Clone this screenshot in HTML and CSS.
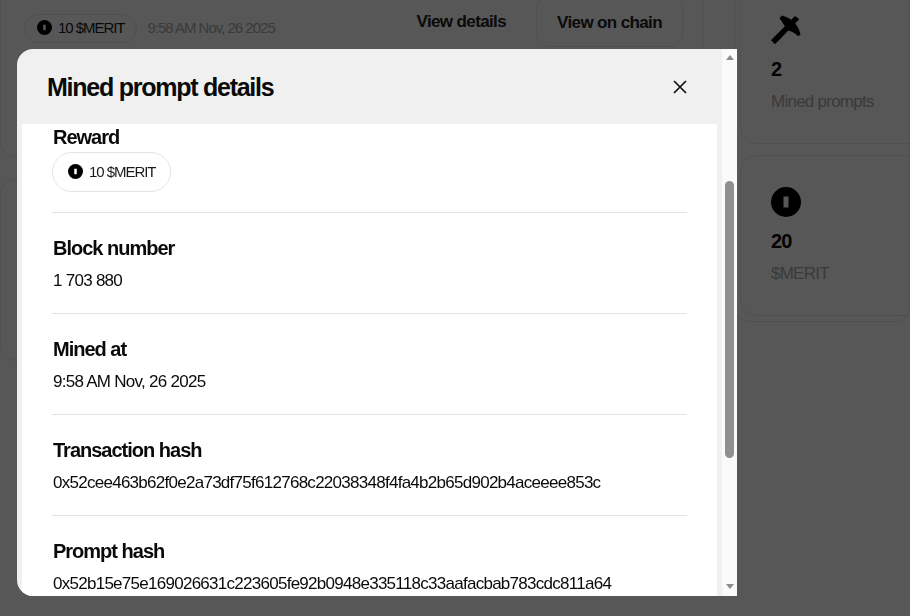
FILE: index.html

```html
<!DOCTYPE html>
<html lang="en">
<head>
  <meta charset="UTF-8" />
  <meta name="viewport" content="width=device-width, initial-scale=1.0"/>
  <title>Mined prompt details</title>
  <link rel="stylesheet" href="styles.css">
</head>
<body>
  <div class="page">
    <div class="prompts">
      <div class="prompt-card">
        <div class="prompt-meta">
          <span class="chip chip-small">
            <svg class="coin" viewBox="0 0 30 30"><circle cx="15" cy="15" r="15"/><rect x="12.500" y="9.500" width="5" height="11" fill="#fff"/></svg>
            10 $MERIT
          </span>
          <span class="prompt-time">9:58 AM Nov, 26 2025</span>
        </div>
        <div class="prompt-actions">
          <a class="action">View details</a>
          <a class="action action-outline">View on chain</a>
        </div>
      </div>
      <div class="prompt-card prompt-card-second"></div>
    </div>
    <div class="stats">
      <div class="stat-card stat-first">
        <svg class="stat-icon" viewBox="0 0 30 30"><path d="M0 25.300 L24 1 L28.300 4.300 L4 29.300 Z"/><path d="M8.500 3 L11 0.500 C16 2 20 4 24 8 C27 12 29 16 29.500 20 L27 21 C24 18 20 16 16 15 C14 11 11 7 8.500 3 Z"/></svg>
        <div class="stat-value">2</div>
        <div class="stat-label">Mined prompts</div>
      </div>
      <div class="stat-card">
        <svg class="stat-icon" viewBox="0 0 30 30"><circle cx="15" cy="15" r="15"/><rect x="12.500" y="9.500" width="5" height="11" fill="#fff"/></svg>
        <div class="stat-value">20</div>
        <div class="stat-label">$MERIT</div>
      </div>
    </div>
  </div>

  <div class="overlay">
    <div class="modal">
      <div class="modal-main">
        <div class="modal-header">
          <h2>Mined prompt details</h2>
          <svg class="close" viewBox="0 0 16 16"><path d="M2 2 L14 14 M14 2 L2 14"/></svg>
        </div>
        <div class="modal-body">
          <div class="row row-first">
            <div class="row-label">Reward</div>
            <span class="chip">
              <svg class="coin" viewBox="0 0 30 30"><circle cx="15" cy="15" r="15"/><rect x="12.500" y="9.500" width="5" height="11" fill="#fff"/></svg>
              10 $MERIT
            </span>
          </div>
          <div class="row">
            <div class="row-label">Block number</div>
            <div class="row-value">1 703 880</div>
          </div>
          <div class="row">
            <div class="row-label">Mined at</div>
            <div class="row-value">9:58 AM Nov, 26 2025</div>
          </div>
          <div class="row">
            <div class="row-label">Transaction hash</div>
            <div class="row-value">0x52cee463b62f0e2a73df75f612768c22038348f4fa4b2b65d902b4aceeee853c</div>
          </div>
          <div class="row">
            <div class="row-label">Prompt hash</div>
            <div class="row-value">0x52b15e75e169026631c223605fe92b0948e335118c33aafacbab783cdc811a64</div>
          </div>
        </div>
      </div>
      <div class="scrollbar">
        <span class="arrow-up"></span>
        <span class="thumb"></span>
        <span class="arrow-down"></span>
      </div>
    </div>
  </div>
</body>
</html>
```

FILE: styles.css

```css
body {
  margin: 0;
  height: 616px;
  overflow: hidden;
  background: #fff;
  font-family: "Liberation Sans", Arial, sans-serif;
  color: #0a0a0a;
}

/* page behind the modal */
.page {
  display: flex;
  height: 616px;
  overflow: hidden;
}
.prompts {
  width: 703px;
  flex-shrink: 0;
  margin-top: -20px;
}
.prompt-card {
  display: flex;
  justify-content: space-between;
  box-sizing: border-box;
  height: 178px;
  padding: 33px 19px 0 23px;
  border: 1px solid #ebebeb;
  border-radius: 16px;
}
.prompt-card-second {
  height: 182px;
  margin-top: 21px;
}
.prompt-meta {
  display: flex;
  align-items: center;
  gap: 10px;
  height: 29px;
}
.prompt-time {
  font-size: 15px;
  line-height: 27px;
  height: 29px;
  letter-spacing: -1px;
  color: #aaa;
}
.prompt-actions {
  display: flex;
  align-items: flex-start;
  gap: 30px;
  margin-top: -17px;
}
.action {
  height: 50px;
  line-height: 50px;
  font-size: 17px;
  letter-spacing: -0.63px;
  font-weight: bold;
  color: #222;
}
.action-outline {
  width: 147px;
  text-align: center;
  border: 1px solid #ebebeb;
  border-radius: 12px;
  box-sizing: border-box;
}
.stats {
  flex: 1;
  margin-left: 31px;
  height: 322px;
  padding: 0 0 0 5px;
  border: 1px solid #ebebeb;
  border-top: none;
  border-radius: 0 0 16px 16px;
  box-sizing: border-box;
}
.stat-card {
  box-sizing: border-box;
  height: 161px;
  margin-right: -20px;
  padding: 31px 30px 0;
  border: 1px solid #ebebeb;
  border-radius: 16px;
}
.stat-first {
  height: 189px;
  margin-top: -45px;
  margin-bottom: 11px;
  padding-top: 59px;
}
.stat-icon {
  display: block;
  width: 30px;
  height: 30px;
}
.stat-value {
  margin-top: 12px;
  font-size: 20px;
  line-height: 24px;
  letter-spacing: -0.8px;
  font-weight: bold;
}
.stat-label {
  margin-top: 9px;
  font-size: 17px;
  line-height: 24px;
  letter-spacing: -0.75px;
  color: #aaa;
}

/* shared chip */
.chip {
  display: inline-flex;
  align-items: center;
  gap: 6px;
  box-sizing: border-box;
  height: 40px;
  padding: 0 15px 2px;
  border: 1px solid #e4e4e4;
  border-radius: 20px;
  font-size: 15px;
  letter-spacing: -1.05px;
  color: #1a1a1a;
}
.chip-small {
  height: 29px;
  padding: 0 12px 2px;
}
.coin {
  width: 15px;
  height: 15px;
}

/* modal */
.overlay {
  position: fixed;
  inset: 0;
  display: flex;
  box-sizing: border-box;
  padding: 49px 173px 20px 17px;
  background: rgba(0, 0, 0, 0.66);
}
.modal {
  display: flex;
  flex: 1;
  overflow: hidden;
  border-radius: 16px 0 0 16px;
}
.modal-main {
  display: flex;
  flex-direction: column;
  flex: 1;
  min-width: 0;
  background: #f0f0f0;
}
.modal-header {
  display: flex;
  align-items: center;
  justify-content: space-between;
  flex-shrink: 0;
  height: 75px;
  padding: 0 34px 0 30px;
}
.modal-header h2 {
  margin: 0;
  font-size: 25px;
  line-height: 32px;
  letter-spacing: -1.25px;
}
.close {
  width: 16px;
  height: 16px;
  fill: none;
  stroke: #111;
  stroke-width: 1.7;
}
.modal-body {
  flex: 1;
  margin: 0 5px;
  padding: 0 30px;
  overflow: hidden;
  background: #fff;
}
.row {
  padding: 21px 0 18px;
  border-bottom: 1px solid #e4e4e4;
}
.row:last-child {
  border-bottom: none;
}
.row-first {
  margin-top: -1px;
  padding-top: 0;
  padding-bottom: 20px;
  height: 69px;
}
.row-first .row-label {
  margin-bottom: 1px;
}
.row-label {
  padding-left: 1px;
  font-size: 20px;
  line-height: 28px;
  letter-spacing: -1px;
  font-weight: bold;
}
.row-value {
  margin-top: 5px;
  padding-left: 1px;
  font-size: 17px;
  line-height: 28px;
  letter-spacing: -0.73px;
}

/* scrollbar */
.scrollbar {
  display: flex;
  flex-direction: column;
  align-items: center;
  flex-shrink: 0;
  width: 15px;
  padding: 6px 0 7px;
  box-sizing: border-box;
  background: #fafafa;
}
.arrow-up,
.arrow-down {
  width: 0;
  height: 0;
  border-left: 4.5px solid transparent;
  border-right: 4.5px solid transparent;
}
.arrow-up {
  border-bottom: 5px solid #8c8c8c;
}
.arrow-down {
  margin-top: auto;
  border-top: 5px solid #8c8c8c;
}
.thumb {
  width: 9px;
  height: 277px;
  margin-top: 121px;
  border-radius: 4.5px;
  background: #8f8f8f;
}
```
